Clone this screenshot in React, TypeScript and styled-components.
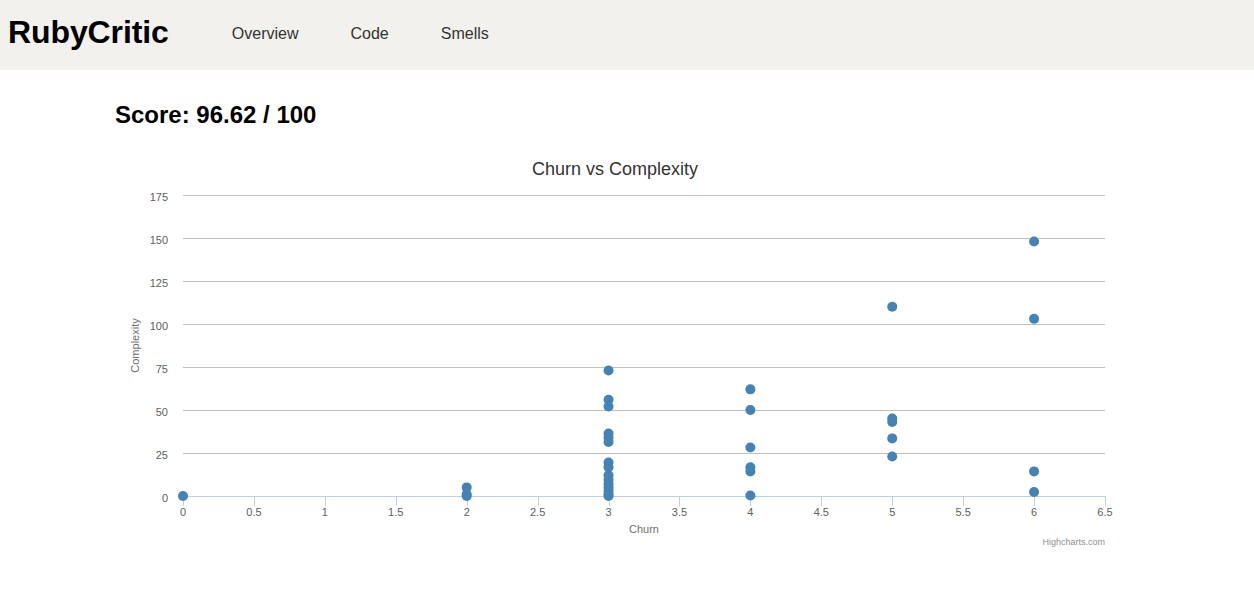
import React from "react";
import styled, { createGlobalStyle } from "styled-components";

const GlobalStyle = createGlobalStyle`
  html, body { margin: 0; padding: 0; background: #ffffff; }
  body { font-family: "Liberation Sans", Arial, sans-serif; color: #000; }
`;

const Header = styled.header`
  height: 70px;
  background: #f2f1ee;
  display: flex;
  align-items: flex-start;
`;

const Logo = styled.a`
  margin: 16px 0 0 8px;
  font-size: 32px;
  line-height: 32px;
  font-weight: bold;
  letter-spacing: -0.1px;
  color: #000;
  text-decoration: none;
`;

const Nav = styled.nav`
  display: flex;
  margin: 26px 0 0 37px;
`;

const NavLink = styled.a`
  padding: 0 26px;
  font-size: 16px;
  line-height: 16px;
  color: #333;
  text-decoration: none;
`;

const Main = styled.main`
  width: 1024px;
  margin: 0 auto;
`;

const Score = styled.h2`
  margin: 31px 0 0 0;
  font-size: 24px;
  line-height: 28px;
  font-weight: bold;
`;

const ChartBox = styled.div`
  margin-top: 21px;
  width: 1000px;
  height: 400px;
  font-family: "Liberation Sans", Arial, sans-serif;
`;

const PL = 68;
const PR = 990;
const PT = 45;
const PB = 346;
const xs = (v: number) => PL + (v / 6.5) * (PR - PL);
const ys = (v: number) => PB - (v / 175) * (PB - PT);

const points: [number, number][] = [
  [0, 0],
  [2, 5], [2, 1], [2, 0],
  [3, 73], [3, 56], [3, 52], [3, 36.3], [3, 34], [3, 31.4], [3, 19.5], [3, 16.7],
  [3, 12], [3, 9.5], [3, 7], [3, 5], [3, 3], [3, 1], [3, 0],
  [4, 62], [4, 50], [4, 28.2], [4, 16.7], [4, 14.3], [4, 0.3],
  [5, 110], [5, 45], [5, 43], [5, 33.5], [5, 23],
  [6, 148], [6, 103], [6, 14.3], [6, 2.3],
];

const yTicks = [0, 25, 50, 75, 100, 125, 150, 175];
const xTicks = [0, 0.5, 1, 1.5, 2, 2.5, 3, 3.5, 4, 4.5, 5, 5.5, 6, 6.5];

const ScatterChart: React.FC = () => (
  <svg width={1000} height={400} viewBox="0 0 1000 400">
    <text x={500} y={25} textAnchor="middle" fontSize={18} fill="#333333">
      Churn vs Complexity
    </text>
    {yTicks.map((t) =>
      t === 0 ? null : (
        <line key={`g${t}`} x1={PL} x2={PR} y1={ys(t) + 0.5} y2={ys(t) + 0.5} stroke="#c0c0c0" strokeWidth={1} />
      )
    )}
    {yTicks.map((t) => (
      <text key={`yl${t}`} x={53} y={ys(t) + 5.5} textAnchor="end" fontSize={11} fill="#606060">
        {t}
      </text>
    ))}
    <line x1={PL} x2={PR} y1={PB + 0.5} y2={PB + 0.5} stroke="#c0d0e0" strokeWidth={1} />
    {xTicks.map((t) => (
      <line
        key={`xt${t}`}
        x1={Math.round(xs(t)) + 0.5}
        x2={Math.round(xs(t)) + 0.5}
        y1={PB}
        y2={PB + 10}
        stroke="#c0d0e0"
        strokeWidth={1}
      />
    ))}
    {xTicks.map((t) => (
      <text key={`xl${t}`} x={xs(t)} y={366} textAnchor="middle" fontSize={11} fill="#606060">
        {t}
      </text>
    ))}
    <text x={529} y={383} textAnchor="middle" fontSize={11} fill="#707070">
      Churn
    </text>
    <text
      x={24}
      y={195.5}
      textAnchor="middle"
      fontSize={11}
      fill="#707070"
      transform="rotate(-90 24 195.5)"
    >
      Complexity
    </text>
    {points.map(([x, y], i) => (
      <circle key={i} cx={xs(x)} cy={ys(y)} r={5} fill="#4682b4" />
    ))}
    <text x={990} y={395} textAnchor="end" fontSize={9} fill="#909090">
      Highcharts.com
    </text>
  </svg>
);

export default function App() {
  return (
    <>
      <GlobalStyle />
      <Header>
        <Logo href="#">RubyCritic</Logo>
        <Nav>
          <NavLink href="#">Overview</NavLink>
          <NavLink href="#">Code</NavLink>
          <NavLink href="#">Smells</NavLink>
        </Nav>
      </Header>
      <Main>
        <Score>Score: 96.62 / 100</Score>
        <ChartBox>
          <ScatterChart />
        </ChartBox>
      </Main>
    </>
  );
}
